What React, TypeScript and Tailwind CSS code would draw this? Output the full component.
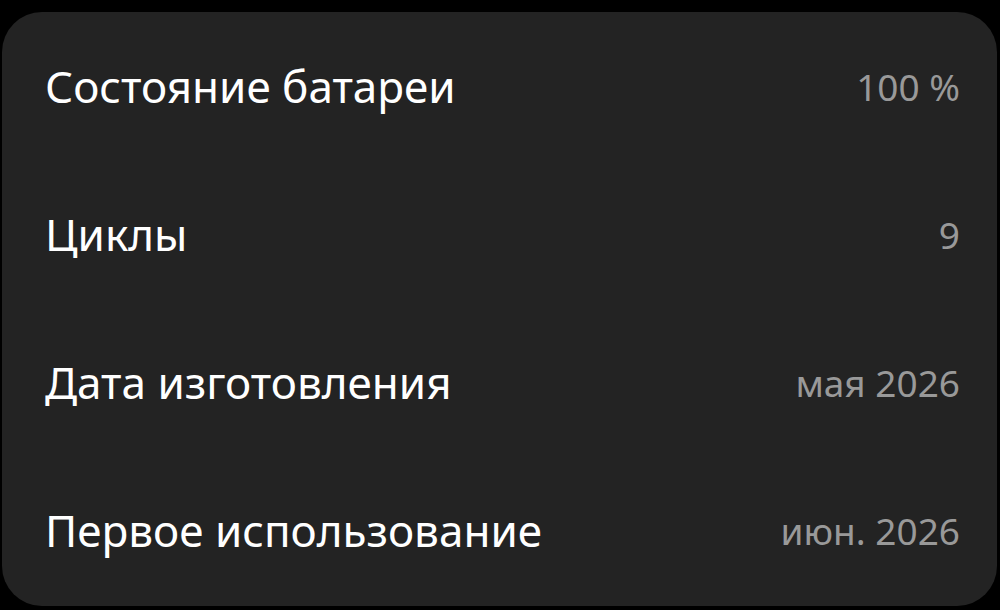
const rows = [
  { label: 'Состояние батареи', value: '100 %' },
  { label: 'Циклы', value: '9' },
  { label: 'Дата изготовления', value: 'мая 2026' },
  { label: 'Первое использование', value: 'июн. 2026' },
]

export default function App() {
  return (
    <div className="h-[610px] w-[1000px] overflow-hidden bg-black pt-3 pl-0.5 pr-[3px] font-['Noto_Sans',sans-serif]">
      <div className="h-[594px] rounded-[40px] bg-[#232323]">
        {rows.map((row) => (
          <div key={row.label} className="flex h-[148px] items-center justify-between pl-[43px] pr-[37px]">
            <span className="text-[44px] leading-none text-white">{row.label}</span>
            <span className="text-[37px] leading-none text-[#999999]">{row.value}</span>
          </div>
        ))}
      </div>
    </div>
  )
}
